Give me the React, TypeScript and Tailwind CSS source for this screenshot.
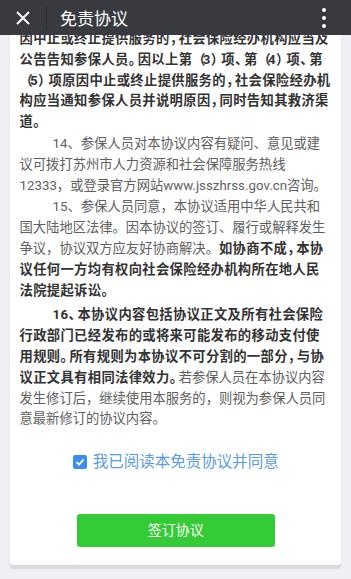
import React, { useState } from "react";

const font = "font-['Roboto','Noto_Sans_CJK_SC',sans-serif]";

const Header = () => (
  <div className="relative z-10 flex h-[35px] items-center bg-[#393a3f] text-white">
    <div className="flex w-[46px] items-center justify-center">
      <svg width="16" height="16" viewBox="0 0 16 16" fill="none">
        <path d="M2 2L14 14M14 2L2 14" stroke="white" strokeWidth="2" />
      </svg>
    </div>
    <div className="h-[24px] w-px bg-[#2c2d31]" />
    <div className="ml-[13px] flex-1 font-['Noto_Sans_CJK_SC',sans-serif] text-[17px]">免责协议</div>
    <div className="mr-[25px] flex flex-col gap-[4px]">
      <span className="h-[4px] w-[4px] rounded-full bg-white" />
      <span className="h-[4px] w-[4px] rounded-full bg-white" />
      <span className="h-[4px] w-[4px] rounded-full bg-white" />
    </div>
  </div>
);

// bold runs: slightly wider glyphs, narrower punctuation (as in the screenshot)
const B = ({ text }: { text: string }) => {
  const parts = text.split(/([，。、（）])/).filter(Boolean);
  return (
    <b className="font-bold tracking-[0.35px] text-[#333]">
      {parts.map((p, i) => {
        if (p === "（") {
          return (
            <span key={i} className="inline-block w-[10.5px] indent-0 text-right tracking-normal">
              {p}
            </span>
          );
        }
        if (p === "）") {
          return (
            <span key={i} className="inline-block w-[10.5px] indent-0 text-left tracking-normal">
              {p}
            </span>
          );
        }
        if (/^[，。、]$/.test(p)) {
          return (
            <span key={i} className="tracking-[-4.3px]">
              {p}
            </span>
          );
        }
        return <React.Fragment key={i}>{p}</React.Fragment>;
      })}
    </b>
  );
};

export default function App() {
  const [agree, setAgree] = useState(true);

  return (
    <div className={`flex h-[579px] flex-col overflow-hidden bg-[#efeff4] ${font}`}>
      <Header />
      <div className="flex-1 overflow-hidden">
        <div className="mx-[10px] -mt-[6px] rounded-b-[4px] bg-white pb-[18px] pl-[9.5px] pr-[9px] shadow-[0_4px_2px_#d8d8dc]">
          <div className="text-[13.3px] leading-[20.8px] text-[#606060]">
            <p>
              <B text="因中止或终止提供服务的，社会保险经办机构应当及公告告知参保人员。因以上第（3）项、第（4）项、第（5）项原因中止或终止提供服务的，社会保险经办机构应当通知参保人员并说明原因，同时告知其救济渠道。" />
            </p>
            <p className="mt-[1px] indent-[33px]">
              14、参保人员对本协议内容有疑问、意见或建议可拨打苏州市人力资源和社会保障服务热线12333，或登录官方网站www.jsszhrss.gov.cn咨询。
            </p>
            <p className="mt-[1px] indent-[33px]">
              15、参保人员同意，本协议适用中华人民共和国大陆地区法律。因本协议的签订、履行或解释发生争议，协议双方应友好协商解决。
              <B text="如协商不成，本协议任何一方均有权向社会保险经办机构所在地人民法院提起诉讼。" />
            </p>
            <p className="mt-[4px] indent-[33px]">
              <B text="16、本协议内容包括协议正文及所有社会保险行政部门已经发布的或将来可能发布的移动支付使用规则。所有规则为本协议不可分割的一部分，与协议正文具有相同法律效力。" />
              若参保人员在本协议内容发生修订后，继续使用本服务的，则视为参保人员同意最新修订的协议内容。
            </p>
          </div>

          <label className="mt-[22px] flex cursor-pointer items-center justify-center gap-[6px]">
            <span
              onClick={() => setAgree(!agree)}
              className={`flex h-[14px] w-[14px] items-center justify-center rounded-[2px] ${agree ? "bg-[#3b8df0]" : "border border-[#aaa] bg-white"}`}
            >
              {agree && (
                <svg width="10" height="10" viewBox="0 0 10 10" fill="none">
                  <path d="M1.5 5.2L4 7.6L8.6 2.4" stroke="white" strokeWidth="1.8" />
                </svg>
              )}
            </span>
            <span className="text-[15.5px] leading-[20px] text-[#5a9ae6]">我已阅读本免责协议并同意</span>
          </label>

          <div className="mt-[42px] flex justify-center">
            <button className="h-[33px] w-[198px] rounded-[3px] bg-[#34cb36] text-[14px] text-white">
              签订协议
            </button>
          </div>
        </div>
      </div>
    </div>
  );
}
